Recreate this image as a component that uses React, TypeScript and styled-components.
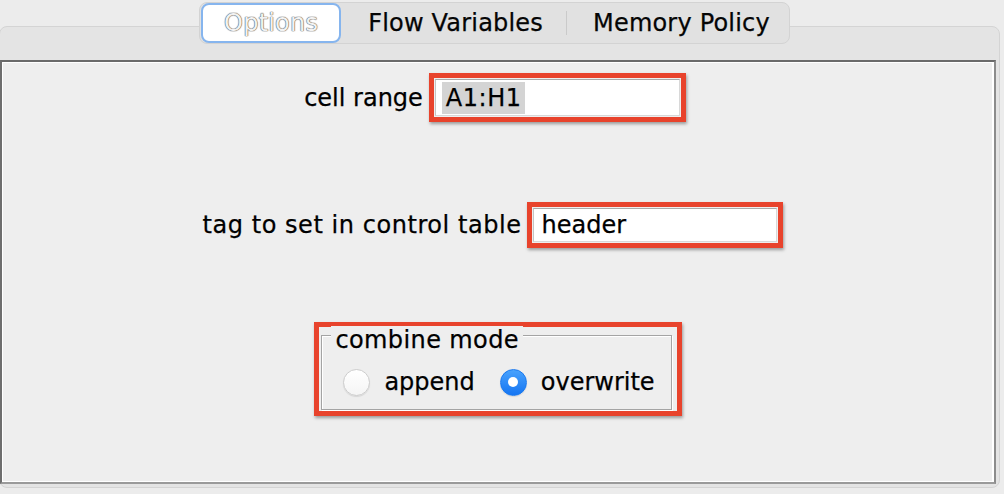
import React from 'react';
import styled, { createGlobalStyle } from 'styled-components';

const GlobalStyle = createGlobalStyle`
  html, body {
    margin: 0;
    padding: 0;
    background: #ececec;
  }
  body {
    font-family: "DejaVu Sans", "Liberation Sans", sans-serif;
    -webkit-text-stroke: 0.25px currentColor;
    overflow: hidden;
  }
`;

const Window = styled.div`
  width: 1004px;
  height: 494px;
  display: flex;
  flex-direction: column;
  box-sizing: border-box;
`;

const TabRow = styled.div`
  display: flex;
  justify-content: center;
  padding: 2px 15px 0 0;
  position: relative;
  z-index: 1;
`;

const Segmented = styled.div`
  display: flex;
  align-items: center;
  height: 40px;
  padding: 0 1px;
  background: #e1e1e1;
  border: 1px solid #d3d3d3;
  border-radius: 8px;
`;

const Tab = styled.div<{ $active?: boolean; $pad: string }>`
  height: 40px;
  box-sizing: border-box;
  display: flex;
  align-items: center;
  padding: ${(p) => p.$pad};
  font-size: 24px;
  line-height: 28px;
  color: #050505;
  letter-spacing: 0.2px;
  border: 2px solid transparent;
  border-radius: 8px;
  ${(p) =>
    p.$active &&
    `
    background: #fff;
    border-color: #86b5ee;
    color: #f2f2f2;
    -webkit-text-stroke: 0;
    text-shadow: 0 0 1px #555, 0 0 1px #666, 0 0 1px #777;
  `}
`;

const Separator = styled.span`
  width: 1px;
  height: 24px;
  background: #cacaca;
`;

const Pane = styled.div`
  flex: 1;
  display: flex;
  margin: -18px 4px 6px -1px;
  padding-top: 33px;
  background: #e4e4e4;
  border: 1px solid #d4d4d4;
  border-radius: 8px;
`;

const Panel = styled.div`
  flex: 1;
  display: flex;
  flex-direction: column;
  align-items: center;
  margin: 0 3px 3px 0;
  padding-top: 11px;
  background: #eeeeee;
  border: 2px solid;
  border-color: #6a6a6a #8c8c8c #9a9a9a #6e6e6e;
  box-shadow: inset 1px 1px 0 #fff, inset -2px -1px 0 #fff;
`;

const Row = styled.div<{ $top: number; $shift: number }>`
  display: flex;
  align-items: center;
  gap: 6px;
  margin-top: ${(p) => p.$top}px;
  margin-right: ${(p) => p.$shift * 2}px;
`;

const Label = styled.span<{ $spacing?: number }>`
  font-size: 24px;
  line-height: 28px;
  color: #000;
  letter-spacing: ${(p) => p.$spacing ?? 0}px;
`;

const Mark = styled.div`
  display: flex;
  padding: 1px;
  border: 5px solid #e8432c;
  box-shadow: 1px 2px 3px rgba(0, 0, 0, 0.35);
`;

const Field = styled.div<{ $width: number; $height: number; $inset: number }>`
  width: ${(p) => p.$width}px;
  height: ${(p) => p.$height}px;
  box-sizing: border-box;
  display: flex;
  align-items: center;
  padding-left: ${(p) => p.$inset}px;
  background: #fff;
  border: 1px solid #d8d8d8;
  border-top-color: #a9a9a9;
  border-left-color: #c4c4c4;
  font-size: 24px;
  color: #000;
`;

const Selection = styled.span`
  background: #d4d4d4;
  padding: 0 4px;
  line-height: 32px;
  letter-spacing: 0.5px;
`;

const GroupBox = styled.div`
  display: flex;
  flex-direction: column;
  align-items: flex-start;
  margin: 7px 4px 0 1px;
  padding: 0 16px 13px 21px;
  border: 1px solid #a4a4a4;
  box-shadow: inset 1px 1px 0 #fff, 1px 1px 0 #fff;
`;

const Legend = styled.span`
  margin: -10px 0 0 -12px;
  padding: 0 4px;
  background: #eeeeee;
  font-size: 24px;
  line-height: 28px;
  letter-spacing: 0.4px;
  color: #000;
`;

const Radios = styled.div`
  display: flex;
  align-items: center;
  gap: 25px;
  margin-top: 14px;
`;

const Choice = styled.label`
  display: flex;
  align-items: center;
  gap: 14px;
  font-size: 24px;
  line-height: 28px;
  color: #000;
`;

const RadioDot = styled.span<{ $checked?: boolean }>`
  position: relative;
  width: 27px;
  height: 27px;
  box-sizing: border-box;
  border-radius: 50%;
  border: 1px solid ${(p) => (p.$checked ? '#1a79ee' : '#cdcdcd')};
  background: ${(p) =>
    p.$checked
      ? 'linear-gradient(#48a2fd, #1575f2)'
      : 'linear-gradient(#ffffff, #f5f5f5)'};
  box-shadow: 0 1px 1px rgba(0, 0, 0, 0.1);
  ${(p) =>
    p.$checked &&
    `
    &::after {
      content: '';
      position: absolute;
      left: 7.5px;
      top: 7.5px;
      width: 10px;
      height: 10px;
      border-radius: 50%;
      background: #fff;
    }
  `}
`;

const App: React.FC = (): JSX.Element => {
  return (
    <Window>
      <GlobalStyle />
      <TabRow>
        <Segmented>
          <Tab $active $pad="0 21px">Options</Tab>
          <Tab $pad="0 21px 0 25px">Flow Variables</Tab>
          <Separator />
          <Tab $pad="0 16px 0 24px">Memory Policy</Tab>
        </Segmented>
      </TabRow>
      <Pane>
        <Panel>
          <Row $top={0} $shift={3}>
            <Label>cell range</Label>
            <Mark>
              <Field $width={245} $height={37} $inset={6}>
                <Selection>A1:H1</Selection>
              </Field>
            </Mark>
          </Row>
          <Row $top={80} $shift={5}>
            <Label $spacing={0.55}>tag to set in control table</Label>
            <Mark>
              <Field $width={244} $height={34} $inset={7}>
                header
              </Field>
            </Mark>
          </Row>
          <Row $top={74} $shift={0}>
            <Mark>
              <GroupBox>
                <Legend>combine mode</Legend>
                <Radios>
                  <Choice>
                    <RadioDot />
                    append
                  </Choice>
                  <Choice>
                    <RadioDot $checked />
                    overwrite
                  </Choice>
                </Radios>
              </GroupBox>
            </Mark>
          </Row>
        </Panel>
      </Pane>
    </Window>
  );
};

export default App;
